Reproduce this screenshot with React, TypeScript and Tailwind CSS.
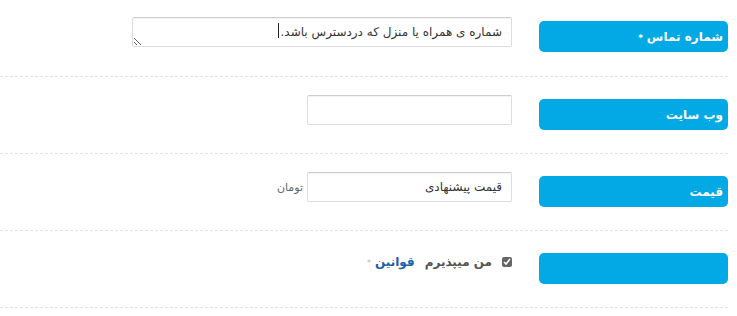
export default function App() {
  const font = "font-['DejaVu_Sans',sans-serif]";
  return (
    <div dir="rtl" className={`w-[737px] h-[316px] bg-white ${font}`}>
      <div className="mr-[9px]">
        {/* Phone */}
        <div className="flex items-start gap-[27px] h-[77px] pt-[17px] border-b border-dashed border-[#e3e3e3]">
          <div className="mt-[4px] w-[189px] h-[31px] rounded-[5px] bg-[#03a9e4] text-white font-bold text-[12px] pr-[5px] flex items-center gap-1">
            <span>شماره تماس</span>
            <span className="text-[9px] pt-[5px]">*</span>
          </div>
          <div className="relative">
            <textarea
              dir="rtl"
              defaultValue="شماره ی همراه یا منزل که دردسترس باشد."
              className="block w-[380px] h-[30px] border border-[#ddd] border-t-[#ccc] rounded-[2px] px-[9px] py-[5px] text-[12px] text-[#333] leading-[18px] resize outline-none shadow-[inset_0_1px_1px_rgba(0,0,0,0.05)]"
            />
            {/* text caret */}
            <span className="absolute left-[146px] top-[6px] w-px h-[15px] bg-[#222]" />
          </div>
        </div>

        {/* Website */}
        <div className="flex items-start gap-[27px] h-[77px] pt-[18px] border-b border-dashed border-[#e3e3e3]">
          <div className="mt-[4px] w-[189px] h-[31px] rounded-[5px] bg-[#03a9e4] text-white font-bold text-[12px] pr-[5px] flex items-center">
            وب سایت
          </div>
          <input
            type="text"
            className="w-[205px] h-[30px] border border-[#ddd] border-t-[#ccc] rounded-[2px] px-[9px] text-[12px] text-[#333] outline-none shadow-[inset_0_1px_1px_rgba(0,0,0,0.05)]"
          />
        </div>

        {/* Price */}
        <div className="flex items-start gap-[27px] h-[77px] pt-[18px] border-b border-dashed border-[#e3e3e3]">
          <div className="mt-[4px] w-[189px] h-[31px] rounded-[5px] bg-[#03a9e4] text-white font-bold text-[12px] pr-[5px] flex items-center">
            قیمت
          </div>
          <div className="flex items-center gap-[4px]">
            <input
              type="text"
              defaultValue="قیمت پیشنهادی"
              className="w-[205px] h-[30px] border border-[#ddd] border-t-[#ccc] rounded-[2px] px-[9px] text-[12px] text-[#333] outline-none shadow-[inset_0_1px_1px_rgba(0,0,0,0.05)]"
            />
            <span className="text-[11px] text-[#666] pt-[2px]">تومان</span>
          </div>
        </div>

        {/* Terms */}
        <div className="flex items-start gap-[27px] h-[77px] pt-[18px] border-b border-dashed border-[#e3e3e3]">
          <div className="mt-[4px] w-[189px] h-[31px] rounded-[5px] bg-[#03a9e4]" />
          <div className="flex items-center gap-[10px] pt-[4px] text-[12px]">
            <input type="checkbox" defaultChecked className="w-[10px] h-[10px] m-0 accent-[#666]" />
            <span className="font-bold text-[#555]">من میپذیرم</span>
            <span className="flex items-center gap-[4px]">
              <span className="font-bold text-[#1d5ea8]">قوانین</span>
              <span className="text-[8px] text-[#bbb] pt-[3px]">*</span>
            </span>
          </div>
        </div>
      </div>
    </div>
  );
}
